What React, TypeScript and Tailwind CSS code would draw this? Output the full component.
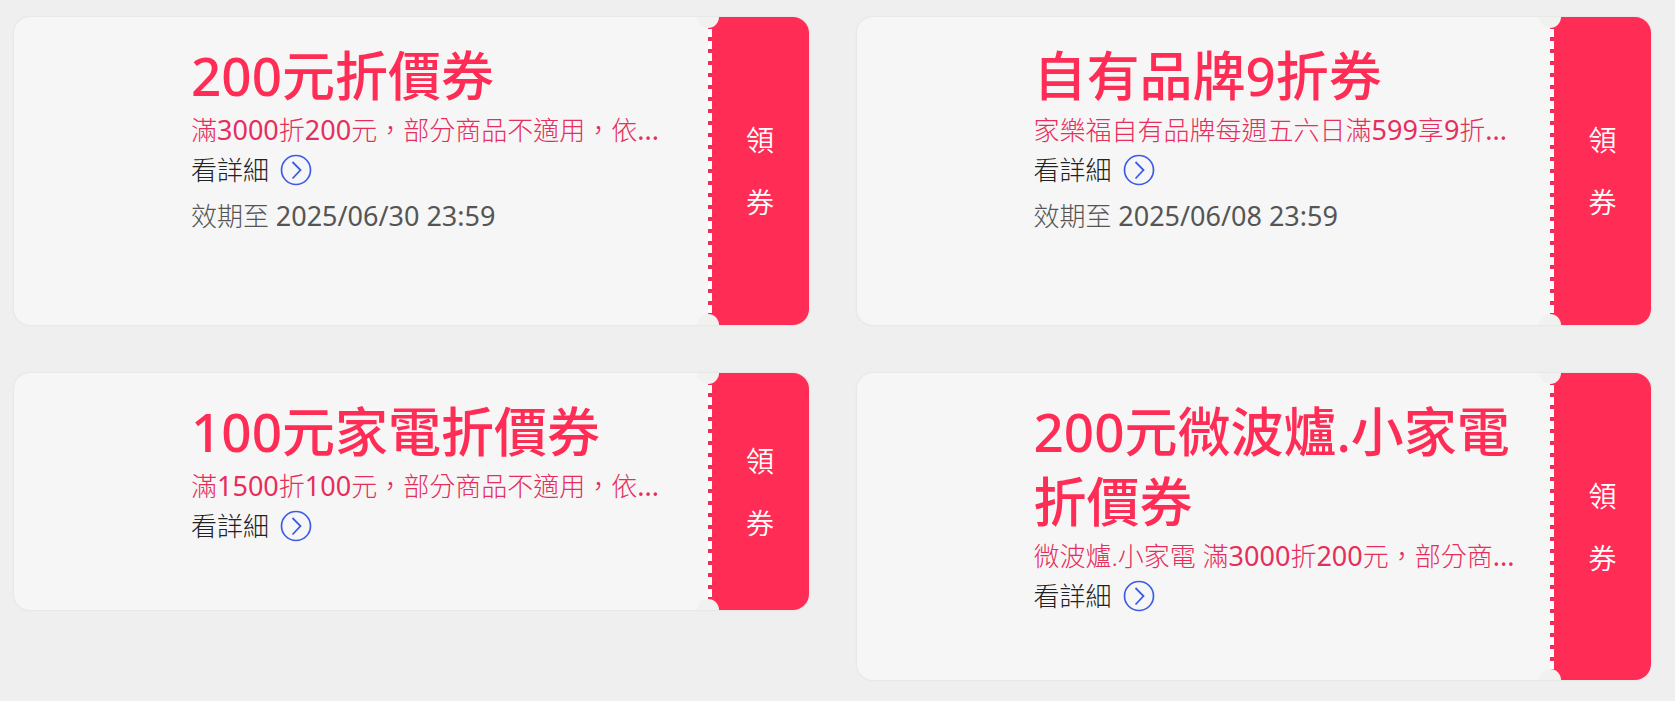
interface Coupon {
  id: number
  title: string
  description: string
  expires?: string
}

const coupons: Coupon[] = [
  {
    id: 1,
    title: '200元折價券',
    description: '滿3000折200元，部分商品不適用，依...',
    expires: '2025/06/30 23:59',
  },
  {
    id: 2,
    title: '自有品牌9折券',
    description: '家樂福自有品牌每週五六日滿599享9折...',
    expires: '2025/06/08 23:59',
  },
  {
    id: 3,
    title: '100元家電折價券',
    description: '滿1500折100元，部分商品不適用，依...',
  },
  {
    id: 4,
    title: '200元微波爐.小家電折價券',
    description: '微波爐.小家電 滿3000折200元，部分商...',
  },
]

function ArrowCircle() {
  return (
    <svg width="32" height="32" viewBox="0 0 32 32" fill="none" stroke="#3d5ce6" aria-hidden="true">
      <circle cx="16" cy="16" r="14.5" strokeWidth="1.7" />
      <path d="M12.5 8l8 8-8 8.5" strokeWidth="1.8" />
    </svg>
  )
}

// Digits and dots are set a step heavier than the light Chinese text around them
function MixedText({ text }: { text: string }) {
  return text.split(/(\d+|\.{3})/).map((part, i) =>
    i % 2 === 1 ? (
      <span key={i} className="text-[27px] font-normal">
        {part}
      </span>
    ) : (
      part
    ),
  )
}

function CouponCard({ coupon }: { coupon: Coupon }) {
  return (
    <article className="relative flex overflow-hidden rounded-2xl bg-[#f6f6f6] shadow-[0_0_3px_rgba(0,0,0,0.08)]">
      <div className="min-w-0 flex-1 pt-6 pr-8 pb-16 pl-[177px]">
        <h2 className="text-[53px] leading-[70px] font-medium text-[#ff2d55]">{coupon.title}</h2>
        <p className="h-[39px] truncate text-[26px] leading-[37px] font-light text-[#e62e5c]">
          <MixedText text={coupon.description} />
        </p>
        <a
          href="#"
          className="flex h-10 w-fit items-center gap-[11px] text-[26px] leading-10 font-light text-[#222]"
        >
          看詳細
          <ArrowCircle />
        </a>
        {coupon.expires && (
          <p className="mt-1.5 mb-[26px] h-[39px] text-[26px] leading-[39px] font-light text-[#555]">
            效期至 <span className="text-[27px] font-normal">{coupon.expires}</span>
          </p>
        )}
      </div>

      <div className="w-1 bg-[repeating-linear-gradient(to_bottom,#fff_0px,#fff_8px,#ea3059_8px,#ea3059_12px)]" />
      <button
        type="button"
        className="flex w-[97px] cursor-pointer flex-col items-center justify-center bg-[#ff2d55] text-[28px] leading-[62px] font-[350] text-white"
      >
        <span>領</span>
        <span>券</span>
      </button>

      {/* ticket notches */}
      <span className="absolute -top-[11px] right-[90px] size-[22px] rounded-full bg-[#f1f1f0]" />
      <span className="absolute right-[90px] -bottom-[11px] size-[22px] rounded-full bg-[#f1f1f0]" />
    </article>
  )
}

export default function App() {
  return (
    <main
      lang="zh-Hant"
      className="grid min-h-screen grid-cols-2 content-start items-start gap-12 bg-[#efefef] pt-[17px] pr-6 pb-5 pl-3.5 font-['Noto_Sans','Noto_Sans_CJK_TC',sans-serif]"
    >
      {coupons.map((coupon) => (
        <CouponCard key={coupon.id} coupon={coupon} />
      ))}
    </main>
  )
}
